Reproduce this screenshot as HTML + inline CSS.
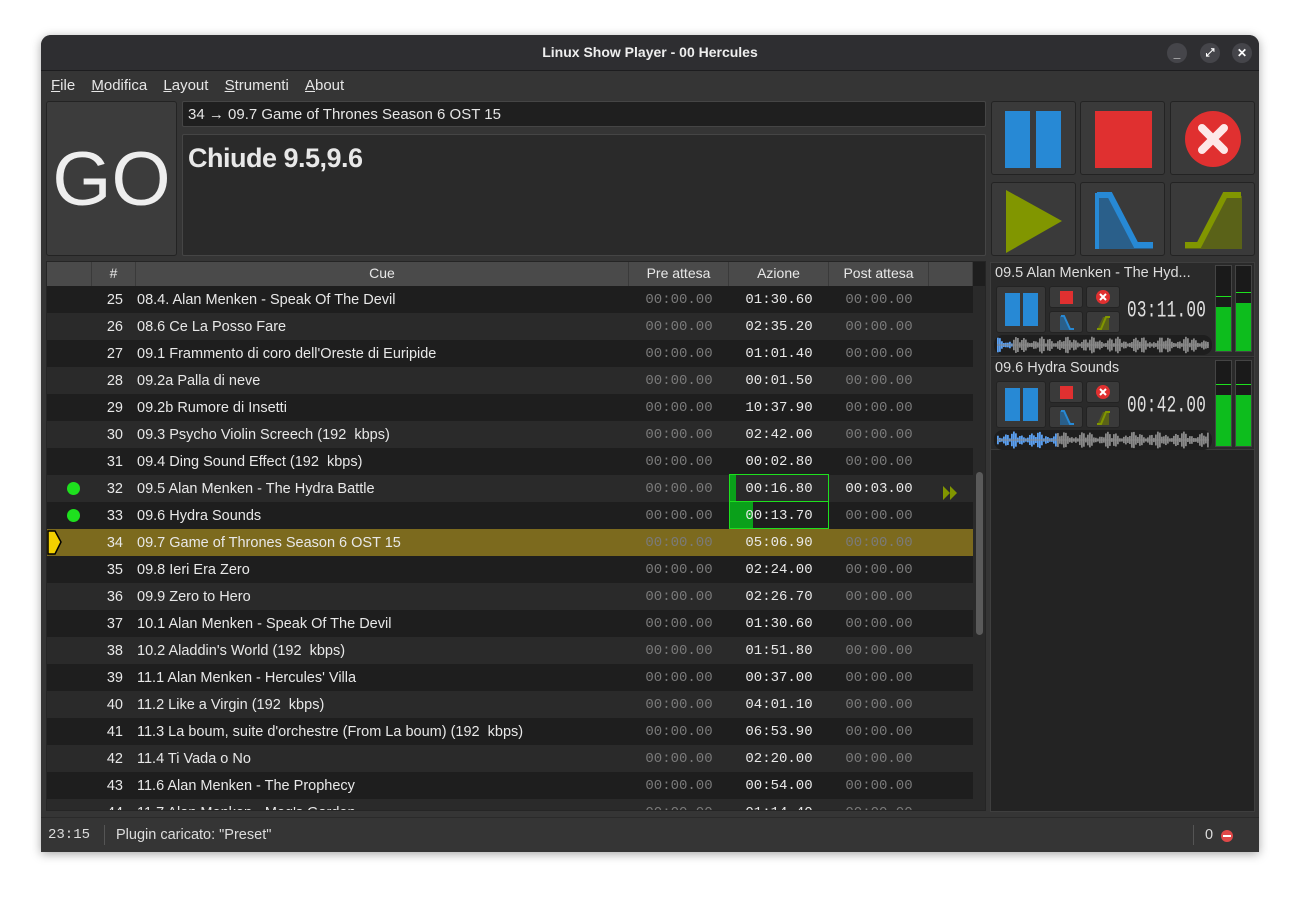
<!DOCTYPE html>
<html><head><meta charset="utf-8">
<style>
*{box-sizing:border-box;margin:0;padding:0}
body{width:1301px;height:899px;background:#fff;font-family:"Liberation Sans",sans-serif;position:relative;overflow:hidden;color:#ddd}
.abs{position:absolute}
#win{left:41px;top:35px;width:1218px;height:817px;background:#353535;border-radius:10px 10px 0 0;overflow:hidden;box-shadow:0 2px 10px rgba(0,0,0,.35)}
#title{left:0;top:0;width:1218px;height:36px;background:#2e2e31;border-bottom:1px solid #1d1d1f;text-align:center;line-height:35px;font-weight:bold;font-size:14px;color:#eee}
.wb{top:8px;width:20px;height:20px;border-radius:50%;background:#45454a;color:#fff;font-size:12px;text-align:center;line-height:20px;font-weight:bold}
#menu{left:0;top:37px;height:26px;font-size:15px;color:#e6e6e6;line-height:27px}
#menu span{margin-left:10px;margin-right:2px}
#menu u{text-decoration:underline}
.btn{background:#3a3a3a;border:1px solid #232323;border-radius:3px}
.mono{font-family:"Liberation Mono",monospace}
#tbl{left:5px;top:226px;width:940px;height:550px;background:#1e1e1e;border:1px solid #252525;overflow:hidden}
.hd{position:absolute;top:0;height:24px;background:#4a4a4a;border-right:1px solid #3a3a3a;color:#e8e8e8;font-size:14px;line-height:23px;text-align:center}
.row{position:absolute;left:0;width:926px;height:27px;font-size:14.5px;line-height:28px}
.row div{position:absolute;top:0}
.n{left:45px;width:31px;text-align:right}
.c{left:90px;white-space:nowrap}
.t{font-family:"Liberation Mono",monospace;font-size:14px;width:100px;text-align:center}
.g{color:#7a7a7a}
.w{color:#e8e8e8}
</style></head><body>
<div id="win" class="abs">
 <div id="title" class="abs">Linux Show Player - 00 Hercules</div>
 <div class="abs wb" style="left:1126px">_</div>
 <div class="abs wb" style="left:1159px;font-size:11px">⤢</div>
 <div class="abs wb" style="left:1191px">✕</div>
 <div id="menu" class="abs"><span><u>F</u>ile</span> <span><u>M</u>odifica</span> <span><u>L</u>ayout</span> <span><u>S</u>trumenti</span> <span><u>A</u>bout</span></div>

 <div class="abs btn" style="left:5px;top:66px;width:131px;height:155px;background:#3c3c3c;color:#eee;font-size:76px;text-align:center;line-height:155px">GO</div>
 <div class="abs" style="left:141px;top:66px;width:804px;height:26px;background:#1f1f1f;border:1px solid #454545;border-radius:2px;font-size:15px;line-height:26px;padding-left:5px;color:#e6e6e6">34 → 09.7 Game of Thrones Season 6 OST 15</div>
 <div class="abs" style="left:141px;top:99px;width:804px;height:122px;background:#2a2a2a;border:1px solid #454545;border-radius:2px;font-size:27px;font-weight:bold;padding:8px 5px;color:#e8e8e8;letter-spacing:-.5px">Chiude 9.5,9.6</div>

 <div class="abs btn" style="left:950px;top:66px;width:85px;height:74px"><svg width="85" height="74"><rect x="13" y="9" width="25" height="57" fill="#2789d5"/><rect x="44" y="9" width="25" height="57" fill="#2789d5"/></svg></div>
 <div class="abs btn" style="left:1039px;top:66px;width:85px;height:74px"><svg width="85" height="74"><rect x="14" y="9" width="57" height="57" fill="#e03030"/></svg></div>
 <div class="abs btn" style="left:1129px;top:66px;width:85px;height:74px"><svg width="85" height="74"><circle cx="42" cy="37" r="28" fill="#e03030"/><path d="M31 26 L53 48 M53 26 L31 48" stroke="#fde8e8" stroke-width="8" stroke-linecap="round"/></svg></div>
 <div class="abs btn" style="left:950px;top:147px;width:85px;height:74px"><svg width="85" height="74"><polygon points="14,7 14,70 70,38" fill="#819600"/></svg></div>
 <div class="abs btn" style="left:1039px;top:147px;width:85px;height:74px"><svg width="85" height="74"><polygon points="14,10 30,10 58,62 72,62 72,66 14,66" fill="#2a5f8a"/><path d="M16 12 L29 12 L55 62 L72 62" stroke="#2789d5" stroke-width="6" fill="none"/><path d="M16 10 L16 66" stroke="#2789d5" stroke-width="4"/></svg></div>
 <div class="abs btn" style="left:1129px;top:147px;width:85px;height:74px"><svg width="85" height="74"><polygon points="14,66 14,60 30,60 55,13 71,13 71,66" fill="#5a6218"/><path d="M14 62 L28 62 L54 12 L70 12" stroke="#819600" stroke-width="6" fill="none"/></svg></div>

 <div id="tbl" class="abs">
  <div class="hd" style="left:0;width:45px"></div>
  <div class="hd" style="left:45px;width:44px">#</div>
  <div class="hd" style="left:89px;width:493px">Cue</div>
  <div class="hd" style="left:582px;width:100px">Pre attesa</div>
  <div class="hd" style="left:682px;width:100px">Azione</div>
  <div class="hd" style="left:782px;width:100px">Post attesa</div>
  <div class="hd" style="left:882px;width:44px"></div>
  <div class="abs" style="left:926px;top:24px;width:14px;height:526px;background:#2a2a2a"></div>
  <div class="abs" style="left:929px;top:210px;width:7px;height:163px;background:#5a5a5a;border-radius:4px"></div>
  <div id="rows"></div>
 </div>

 <div class="abs" style="left:949px;top:227px;width:265px;height:550px;background:#232323;border:1px solid #3e3e3e">
  <div class="abs" style="left:0;top:0;width:263px;height:94px;background:#2a2a2a;border-bottom:1px solid #3a3a3a"></div>
  <div class="abs" style="left:4px;top:2px;font-size:14.5px;color:#ddd;white-space:nowrap">09.5 Alan Menken - The Hyd...</div>
  <div class="abs" style="left:0;top:95px;width:263px;height:92px;background:#2a2a2a;border-bottom:1px solid #3a3a3a"></div>
  <div class="abs" style="left:4px;top:97px;font-size:14.5px;color:#ddd">09.6 Hydra Sounds</div>
  <div id="mini"></div>
 </div>

 <div class="abs" style="left:0;top:782px;width:1218px;height:1px;background:#2a2a2a"></div>
 <div class="abs mono" style="left:7px;top:792px;font-size:14px;color:#ddd">23:15</div>
 <div class="abs" style="left:63px;top:790px;width:1px;height:20px;background:#555"></div>
 <div class="abs" style="left:75px;top:792px;font-size:14.5px;color:#ddd">Plugin caricato: "Preset"</div>
 <div class="abs" style="left:1152px;top:790px;width:1px;height:20px;background:#555"></div>
 <div class="abs" style="left:1164px;top:792px;font-size:14.5px;color:#ddd">0</div>
 <div class="abs" style="left:1180px;top:795px;width:12px;height:12px;border-radius:50%;background:#e04848"><div style="margin:5px 2px;height:2px;background:#fff"></div></div>
</div>
<script>
var d=[["25","08.4. Alan Menken - Speak Of The Devil","01:30.60"],["26","08.6 Ce La Posso Fare","02:35.20"],["27","09.1 Frammento di coro dell'Oreste di Euripide","01:01.40"],["28","09.2a Palla di neve","00:01.50"],["29","09.2b Rumore di Insetti","10:37.90"],["30","09.3 Psycho Violin Screech (192  kbps)","02:42.00"],["31","09.4 Ding Sound Effect (192  kbps)","00:02.80"],["32","09.5 Alan Menken - The Hydra Battle","00:16.80"],["33","09.6 Hydra Sounds","00:13.70"],["34","09.7 Game of Thrones Season 6 OST 15","05:06.90"],["35","09.8 Ieri Era Zero","02:24.00"],["36","09.9 Zero to Hero","02:26.70"],["37","10.1 Alan Menken - Speak Of The Devil","01:30.60"],["38","10.2 Aladdin's World (192  kbps)","01:51.80"],["39","11.1 Alan Menken - Hercules' Villa","00:37.00"],["40","11.2 Like a Virgin (192  kbps)","04:01.10"],["41","11.3 La boum, suite d'orchestre (From La boum) (192  kbps)","06:53.90"],["42","11.4 Ti Vada o No","02:20.00"],["43","11.6 Alan Menken - The Prophecy","00:54.00"],["44","11.7 Alan Menken - Meg's Garden","01:14.40"]];
var h="";
d.forEach(function(r,i){
 var y=24+i*27;var bg=i%2?"#2a2a2a":"#1e1e1e";if(r[0]=="34")bg="#7c6a1e";
 h+='<div class="row" style="top:'+y+'px;background:'+bg+'">';
 if(r[0]=="32"||r[0]=="33")h+='<div style="left:20px;top:7px;width:13px;height:13px;border-radius:50%;background:#1ee01e"></div>';
 if(r[0]=="34")h+='<div style="left:0;top:0"><svg width="16" height="27"><polygon points="1,2 8,2 14,13 8,25 1,25" fill="#f2d000" stroke="#000" stroke-width="1.5"/></svg></div>';
 if(r[0]=="32")h+='<div style="left:682px;top:-1px;width:100px;height:28px;border:1px solid #1ee01e"><div style="position:absolute;left:0;top:0;width:6px;height:26px;background:#0aa01a"></div></div>';
 if(r[0]=="33")h+='<div style="left:682px;top:-1px;width:100px;height:28px;border:1px solid #1ee01e"><div style="position:absolute;left:0;top:0;width:23px;height:26px;background:#0aa01a"></div></div>';
 h+='<div class="n w">'+r[0]+'</div><div class="c w">'+r[1].replace(/  /g,"&nbsp; ")+'</div>';
 h+='<div class="t g" style="left:582px">00:00.00</div><div class="t w" style="left:682px">'+r[2]+'</div><div class="t '+(r[0]=="32"?"w":"g")+'" style="left:782px">'+(r[0]=="32"?"00:03.00":"00:00.00")+'</div>';
 if(r[0]=="32")h+='<div style="left:896px;top:7px"><svg width="16" height="14"><polygon points="0,0 7,7 0,14" fill="#819600"/><polygon points="7,0 14,7 7,14" fill="#819600"/></svg></div>';
 h+='</div>';
});
document.getElementById("rows").innerHTML=h;
function mini(top,time,lv1,lv2,prog){
 var s='';
 s+='<div class="abs btn" style="left:5px;top:'+(top+23)+'px;width:50px;height:47px;background:#383838"><svg width="50" height="47"><rect x="8" y="6" width="15" height="33" fill="#2789d5"/><rect x="26" y="6" width="15" height="33" fill="#2789d5"/></svg></div>';
 s+='<div class="abs btn" style="left:58px;top:'+(top+23)+'px;width:34px;height:22px"><svg width="34" height="22"><rect x="10" y="4" width="13" height="13" fill="#e03030"/></svg></div>';
 s+='<div class="abs btn" style="left:95px;top:'+(top+23)+'px;width:34px;height:22px"><svg width="34" height="22"><circle cx="16" cy="10" r="7" fill="#e03030"/><path d="M13 7 L19 13 M19 7 L13 13" stroke="#fff" stroke-width="2"/></svg></div>';
 s+='<div class="abs btn" style="left:58px;top:'+(top+48)+'px;width:34px;height:22px"><svg width="34" height="22"><polygon points="10,4 14,4 20,16 23,16 23,18 10,18" fill="#2a5f8a"/><path d="M11 4 L14 4 L20 17 L24 17" stroke="#2789d5" stroke-width="2" fill="none"/></svg></div>';
 s+='<div class="abs btn" style="left:95px;top:'+(top+48)+'px;width:34px;height:22px"><svg width="34" height="22"><polygon points="10,18 16,5 22,5 22,18" fill="#5a6218"/><path d="M10 17 L14 17 L19 5 L23 5" stroke="#819600" stroke-width="2" fill="none"/></svg></div>';
 s+='<div class="abs mono" style="left:136px;top:'+(top+36)+'px;font-size:16px;color:#e0e0e0;letter-spacing:0.3px;transform:scaleY(1.45);transform-origin:0 0;line-height:16px">'+time+'</div>';
 var w='<svg width="218" height="20" style="position:absolute;left:3px;top:'+(top+72)+'px"><rect width="218" height="20" rx="9" fill="#1e1e1e"/>';
 for(var x=3;x<215;x+=2){var a=1.5+Math.abs(Math.sin(x*0.37+top)*Math.cos(x*0.13+top))*7;w+='<rect x="'+x+'" y="'+(10-a)+'" width="1.8" height="'+(2*a)+'" fill="'+(x<prog?'#5a9ff0':'#888')+'"/>';}
 s+=w+'<rect x="3" y="9.5" width="212" height="1" fill="#888"/></svg>';
 [224,244].forEach(function(mx,k){var l=k?lv2:lv1;
 s+='<div class="abs" style="left:'+mx+'px;top:'+(top+2)+'px;width:17px;height:87px;background:#1a1a1a;border:1px solid #444"><div style="position:absolute;left:0;bottom:0;width:15px;height:'+l+'px;background:#0dbd1d"></div><div style="position:absolute;left:0;bottom:'+(l+10)+'px;width:15px;height:1px;background:#1ee01e"></div></div>';});
 return s;
}
document.getElementById("mini").innerHTML=mini(0,"03:11.00",44,48,18)+mini(95,"00:42.00",51,51,63);
</script>
</body></html>
